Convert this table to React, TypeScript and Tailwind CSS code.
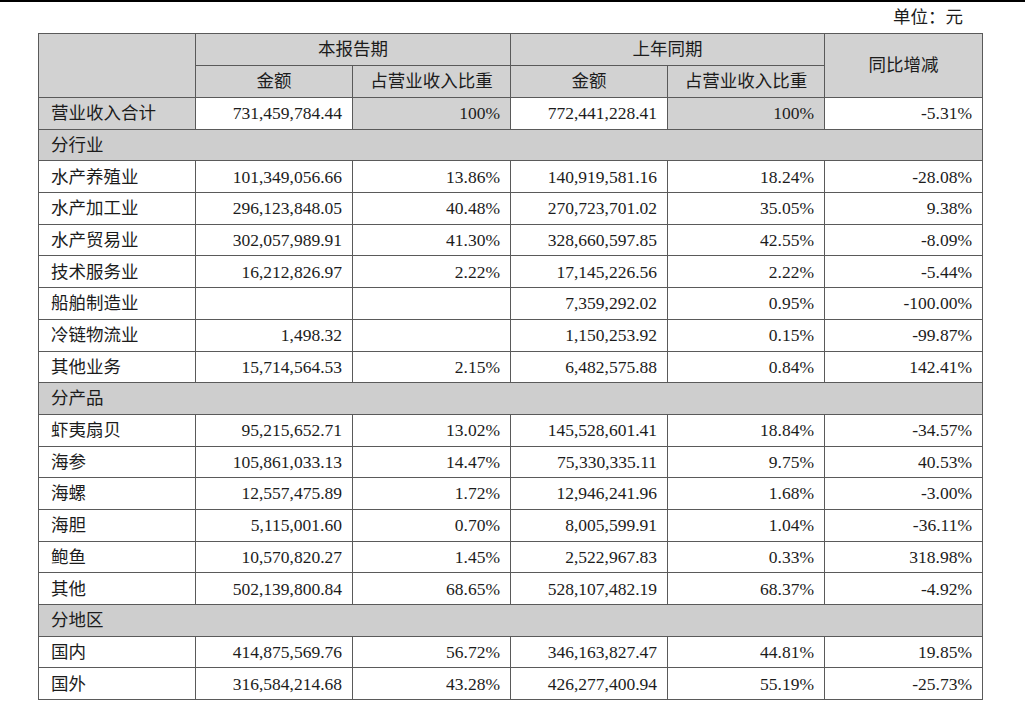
type Row =
  | { kind: "section"; label: string }
  | { kind: "data"; label: string; cells: string[]; total?: boolean };

const rows: Row[] = [
  { kind: "data", label: "营业收入合计", cells: ["731,459,784.44", "100%", "772,441,228.41", "100%", "-5.31%"], total: true },
  { kind: "section", label: "分行业" },
  { kind: "data", label: "水产养殖业", cells: ["101,349,056.66", "13.86%", "140,919,581.16", "18.24%", "-28.08%"] },
  { kind: "data", label: "水产加工业", cells: ["296,123,848.05", "40.48%", "270,723,701.02", "35.05%", "9.38%"] },
  { kind: "data", label: "水产贸易业", cells: ["302,057,989.91", "41.30%", "328,660,597.85", "42.55%", "-8.09%"] },
  { kind: "data", label: "技术服务业", cells: ["16,212,826.97", "2.22%", "17,145,226.56", "2.22%", "-5.44%"] },
  { kind: "data", label: "船舶制造业", cells: ["", "", "7,359,292.02", "0.95%", "-100.00%"] },
  { kind: "data", label: "冷链物流业", cells: ["1,498.32", "", "1,150,253.92", "0.15%", "-99.87%"] },
  { kind: "data", label: "其他业务", cells: ["15,714,564.53", "2.15%", "6,482,575.88", "0.84%", "142.41%"] },
  { kind: "section", label: "分产品" },
  { kind: "data", label: "虾夷扇贝", cells: ["95,215,652.71", "13.02%", "145,528,601.41", "18.84%", "-34.57%"] },
  { kind: "data", label: "海参", cells: ["105,861,033.13", "14.47%", "75,330,335.11", "9.75%", "40.53%"] },
  { kind: "data", label: "海螺", cells: ["12,557,475.89", "1.72%", "12,946,241.96", "1.68%", "-3.00%"] },
  { kind: "data", label: "海胆", cells: ["5,115,001.60", "0.70%", "8,005,599.91", "1.04%", "-36.11%"] },
  { kind: "data", label: "鲍鱼", cells: ["10,570,820.27", "1.45%", "2,522,967.83", "0.33%", "318.98%"] },
  { kind: "data", label: "其他", cells: ["502,139,800.84", "68.65%", "528,107,482.19", "68.37%", "-4.92%"] },
  { kind: "section", label: "分地区" },
  { kind: "data", label: "国内", cells: ["414,875,569.76", "56.72%", "346,163,827.47", "44.81%", "19.85%"] },
  { kind: "data", label: "国外", cells: ["316,584,214.68", "43.28%", "426,277,400.94", "55.19%", "-25.73%"] },
];

const cell = "border border-[#5a5a5a] p-0";

export default function App() {
  return (
    <div className="w-[1025px] h-[709px] bg-white border-t-2 border-black text-[#1c1c1c] text-[17.5px] font-['Liberation_Serif','Noto_Sans_CJK_SC',serif] overflow-hidden">
      <div className="h-[31px] flex items-center justify-end pr-[62px]">单位：元</div>

      <table className="ml-[38px] w-[944px] table-fixed border-collapse">
        <colgroup>
          <col className="w-[157px]" />
          <col className="w-[157px]" />
          <col className="w-[158px]" />
          <col className="w-[157px]" />
          <col className="w-[157px]" />
          <col className="w-[158px]" />
        </colgroup>
        <thead>
          <tr className="h-[32px] bg-[#d2d2d2]">
            <th rowSpan={2} className={cell}></th>
            <th colSpan={2} className={`${cell} font-normal text-center`}>本报告期</th>
            <th colSpan={2} className={`${cell} font-normal text-center`}>上年同期</th>
            <th rowSpan={2} className={`${cell} font-normal text-center`}>同比增减</th>
          </tr>
          <tr className="h-[32px] bg-[#d2d2d2]">
            <th className={`${cell} font-normal text-center`}>金额</th>
            <th className={`${cell} font-normal text-center`}>占营业收入比重</th>
            <th className={`${cell} font-normal text-center`}>金额</th>
            <th className={`${cell} font-normal text-center`}>占营业收入比重</th>
          </tr>
        </thead>
        <tbody>
          {rows.map((r, i) =>
            r.kind === "section" ? (
              <tr key={i} className="h-[31.7px] bg-[#cecece]">
                <td colSpan={6} className={`${cell} pl-3`}>{r.label}</td>
              </tr>
            ) : (
              <tr key={i} className="h-[31.7px]">
                <td className={`${cell} pl-3 ${r.total ? "bg-[#d2d2d2]" : ""}`}>{r.label}</td>
                {r.cells.map((c, j) => (
                  <td
                    key={j}
                    className={`${cell} text-right pr-[10px] ${r.total && j % 2 === 1 ? "bg-[#d2d2d2]" : ""}`}
                  >
                    {c}
                  </td>
                ))}
              </tr>
            )
          )}
        </tbody>
      </table>
    </div>
  );
}
